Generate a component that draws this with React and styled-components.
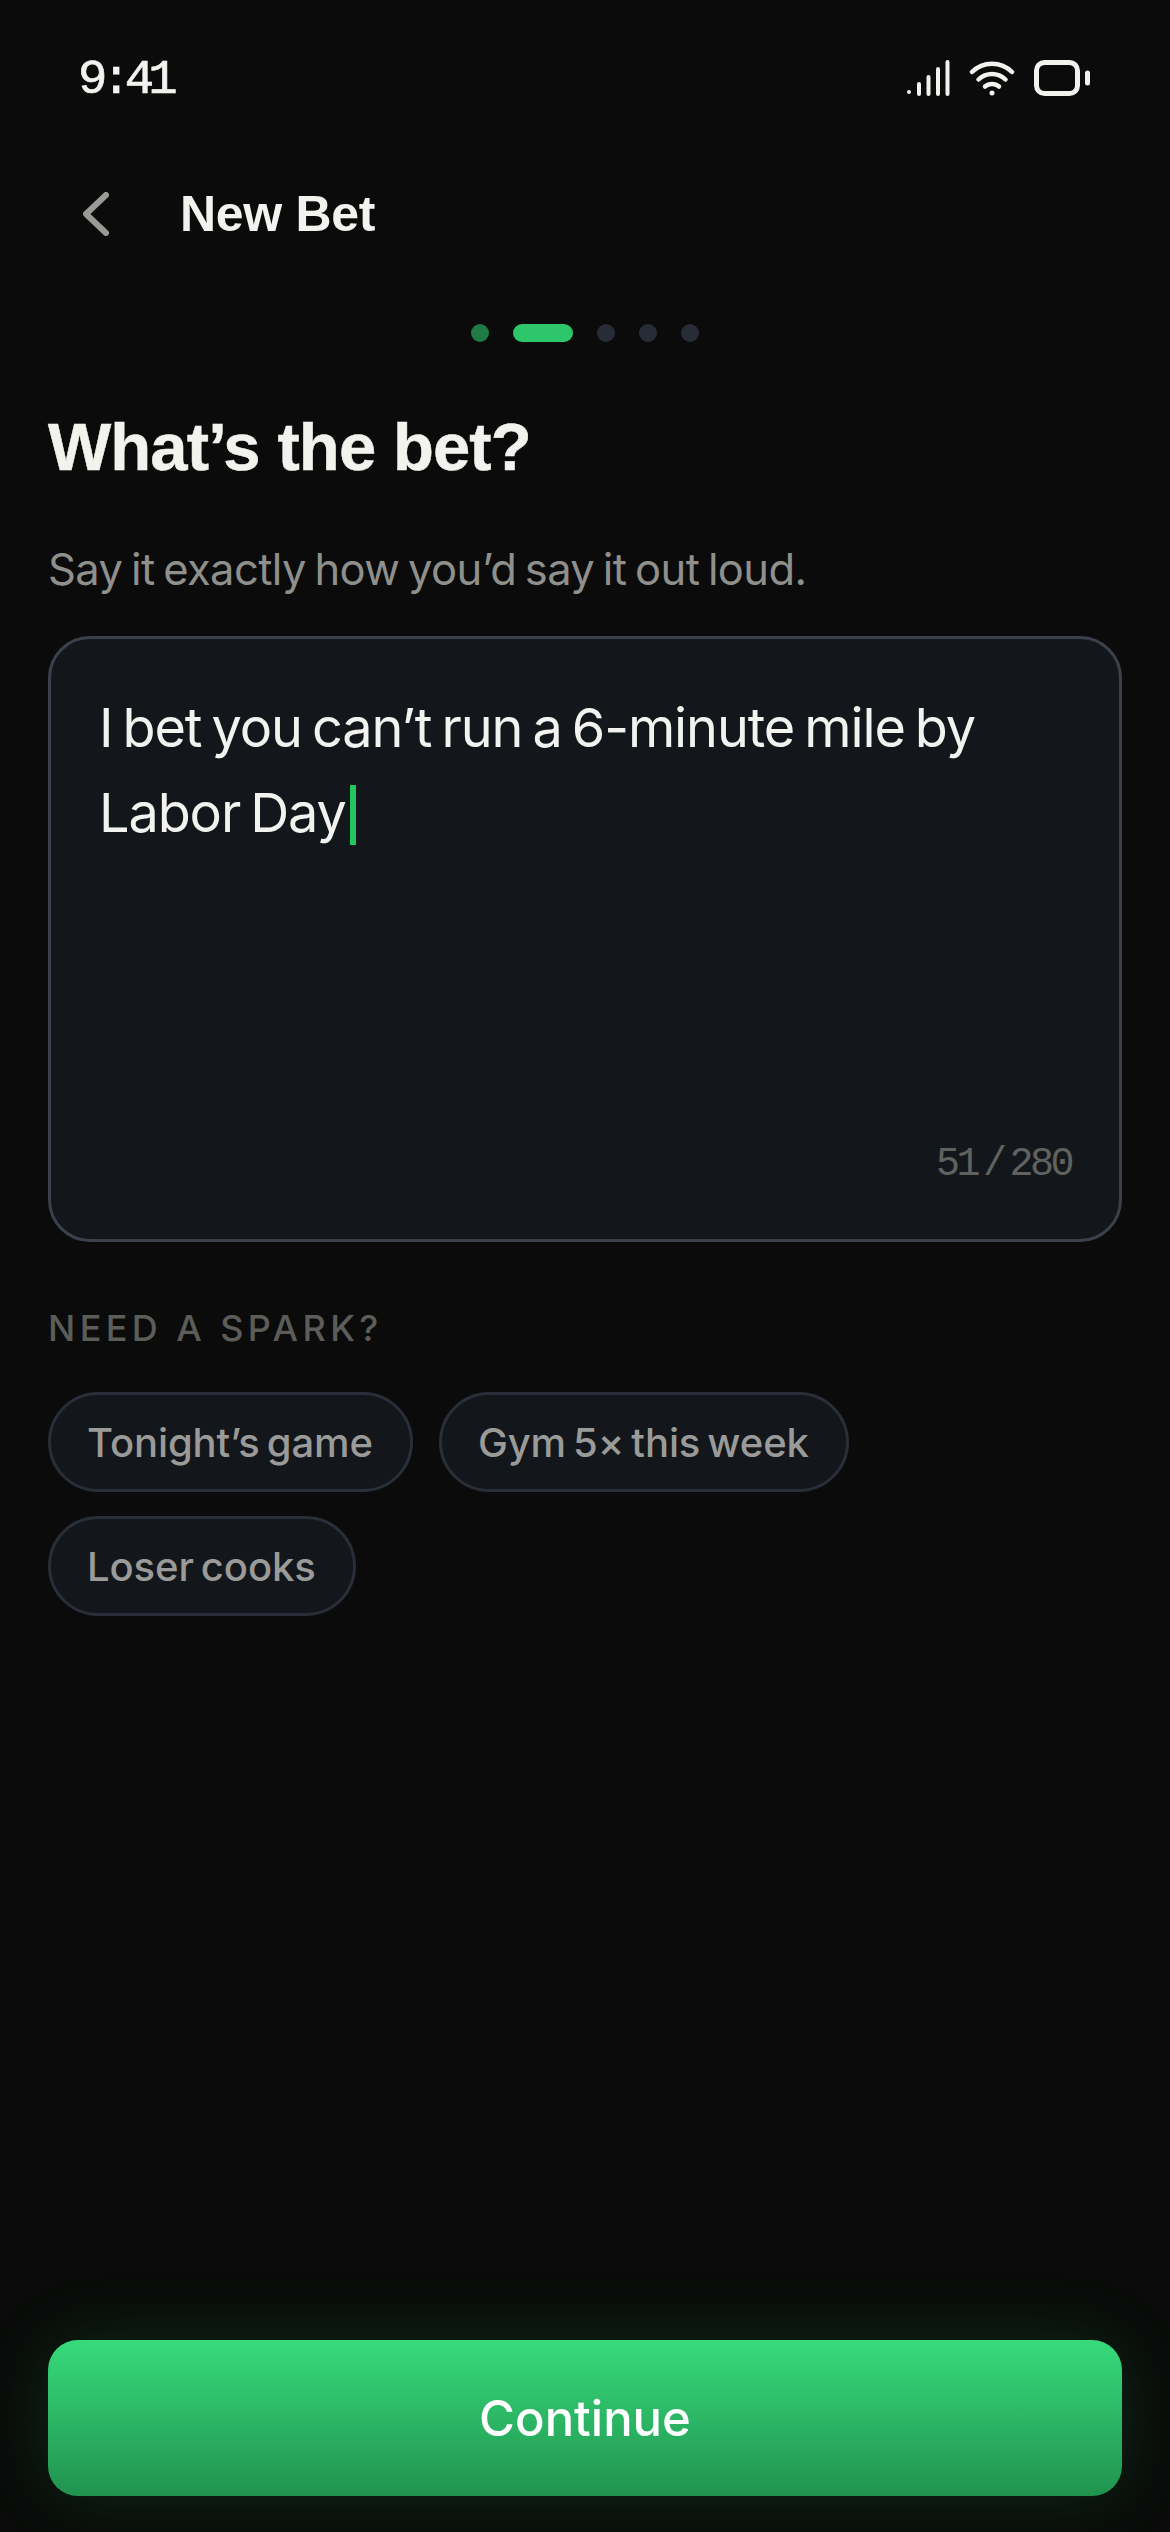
import React from 'react'
import styled, { createGlobalStyle } from 'styled-components'

const GlobalStyle = createGlobalStyle`
  html, body { margin: 0; padding: 0; background: #0a0b0a; }
  * { box-sizing: border-box; }
`

const Screen = styled.div`
  width: 1170px;
  height: 2532px;
  background: #0a0b0a;
  display: flex;
  flex-direction: column;
  overflow: hidden;
  font-family: Inter, "Noto Sans", sans-serif;
  color: #f2f2ee;
`

const StatusBar = styled.div`
  height: 60px;
  margin-top: 48px;
  padding: 0 80px 0 78px;
  display: flex;
  align-items: center;
  justify-content: space-between;
`

const Time = styled.span`
  padding-top: 3px;
  font-family: "Liberation Mono", monospace;
  font-size: 49px;
  letter-spacing: -6px;
  line-height: 60px;
  -webkit-text-stroke: 0.7px #f2f2ee;
`

const StatusIcons = styled.div`
  display: flex;
  align-items: center;
  gap: 17px;
`

const Header = styled.div`
  height: 60px;
  margin-top: 76px;
  padding-left: 83px;
  display: flex;
  align-items: center;
  gap: 71px;
`

const Title = styled.h1`
  margin: 0;
  font-family: "Liberation Sans", Arial, sans-serif;
  font-size: 50px;
  font-weight: 700;
  line-height: 60px;
  letter-spacing: -0.3px;
  color: #f2f2ee;
`

const Steps = styled.div`
  margin-top: 80px;
  display: flex;
  justify-content: center;
  gap: 24px;
`

const Step = styled.span`
  display: block;
  height: 18px;
  width: ${p => (p.$state === 'active' ? '60px' : '18px')};
  border-radius: 9px;
  background: ${p => (p.$state === 'active' ? '#2ec66a' : p.$state === 'done' ? '#1f7a43' : '#282c36')};
`

const Body = styled.div`
  flex: 1;
  padding: 0 48px 36px;
  display: flex;
  flex-direction: column;
`

const Heading = styled.h2`
  margin: 65px 0 0;
  font-family: "Liberation Sans", Arial, sans-serif;
  font-size: 67px;
  font-weight: 700;
  line-height: 80px;
  letter-spacing: -0.9px;
  -webkit-text-stroke: 0.5px #f2f2ee;
  color: #f2f2ee;
`

const Sub = styled.p`
  margin: 54px 0 0;
  font-size: 43.500px;
  line-height: 56px;
  letter-spacing: -0.6px;
  word-spacing: -3px;
  color: #8f908c;
`

const Editor = styled.div`
  position: relative;
  margin-top: 39px;
  height: 606px;
  padding: 46px 48px 0;
  background: #13171c;
  border: 3px solid #3c404b;
  border-radius: 42px;
`

const BetText = styled.div`
  font-size: 54px;
  line-height: 85px;
  letter-spacing: -1.100px;
  word-spacing: -4px;
  color: #f2f2ee;
`

const Caret = styled.span`
  display: inline-block;
  width: 6px;
  height: 60px;
  margin-left: 4px;
  vertical-align: -13px;
  background: #22c55e;
`

const Count = styled.span`
  position: absolute;
  right: 48px;
  bottom: 51px;
  font-family: "Liberation Mono", monospace;
  font-size: 40px;
  line-height: 46px;
  letter-spacing: -3.500px;
  color: #5f625f;
`

const CountSlash = styled.span`
  margin: 0 6px;
`

const SparkLabel = styled.div`
  margin-top: 64px;
  font-size: 36px;
  font-weight: 500;
  line-height: 44px;
  letter-spacing: 4.400px;
  color: #5c5d58;
`

const Chips = styled.div`
  margin-top: 42px;
  display: flex;
  flex-wrap: wrap;
  gap: 24px 26px;
  width: 900px;
`

const Chip = styled.span`
  height: 100px;
  padding: 0 37px 0 36px;
  display: flex;
  align-items: center;
  font-size: 40px;
  font-weight: 500;
  letter-spacing: -0.1px;
  word-spacing: -3.500px;
  color: #9a9b98;
  background: #13171c;
  border: 3px solid #2a2e38;
  border-radius: 50px;
`

const ContinueButton = styled.button`
  margin-top: auto;
  height: 156px;
  border: none;
  border-radius: 30px;
  font-family: Inter, sans-serif;
  font-size: 49px;
  font-weight: 500;
  color: #fff;
  background: linear-gradient(180deg, #37da7b 0%, #21934f 100%);
  box-shadow: 0 0 72px rgba(34, 197, 94, 0.16);
`

const SignalIcon = () => (
  <svg width="46" height="36" viewBox="0 0 46 36" fill="none" stroke="#f2f2ee" strokeWidth="4" strokeLinecap="round">
    <circle cx="3" cy="32" r="2" fill="#f2f2ee" stroke="none" />
    <path d="M13 24v10M22.500 17v17M32 9v25M41.500 2v32" />
  </svg>
)

const WifiIcon = () => (
  <svg width="46" height="36" viewBox="0 0 46 36" fill="none" stroke="#f2f2ee" strokeWidth="4.500" strokeLinecap="round">
    <path d="M3 12C14 1 32 1 43 12" />
    <path d="M9.500 19.500C17 12 29 12 36.500 19.500" />
    <path d="M16 26.500C20 23 26 23 30 26.500" />
    <circle cx="23" cy="33" r="2.500" fill="#f2f2ee" stroke="none" />
  </svg>
)

const BatteryIcon = () => (
  <svg width="58" height="36" viewBox="0 0 58 36" fill="none" stroke="#f2f2ee">
    <rect x="4.500" y="2.500" width="41" height="31" rx="8" strokeWidth="5" />
    <rect x="53" y="10.500" width="5" height="15" rx="2.500" fill="#f2f2ee" stroke="none" />
  </svg>
)

const BackIcon = () => (
  <svg width="26" height="44" viewBox="0 0 26 44" fill="none" stroke="#9a9a96" strokeWidth="6" strokeLinecap="round" strokeLinejoin="round">
    <path d="M23 3L3 22l20 19" />
  </svg>
)

const steps = ['done', 'active', 'todo', 'todo', 'todo']
const sparks = ['Tonight’s game', 'Gym 5× this week', 'Loser cooks']

const App = () => {
  return (
    <Screen>
      <GlobalStyle />
      <StatusBar>
        <Time>9:41</Time>
        <StatusIcons>
          <SignalIcon />
          <WifiIcon />
          <BatteryIcon />
        </StatusIcons>
      </StatusBar>
      <Header>
        <BackIcon />
        <Title>New Bet</Title>
      </Header>
      <Steps>
        {steps.map((s, i) => <Step key={i} $state={s} />)}
      </Steps>
      <Body>
        <Heading>What’s the bet?</Heading>
        <Sub>Say it exactly how you’d say it out loud.</Sub>
        <Editor>
          <BetText>I bet you can’t run a 6-minute mile by Labor Day<Caret /></BetText>
          <Count>51<CountSlash>/</CountSlash>280</Count>
        </Editor>
        <SparkLabel>NEED A SPARK?</SparkLabel>
        <Chips>
          {sparks.map(s => <Chip key={s}>{s}</Chip>)}
        </Chips>
        <ContinueButton>Continue</ContinueButton>
      </Body>
    </Screen>
  )
}

export default App
